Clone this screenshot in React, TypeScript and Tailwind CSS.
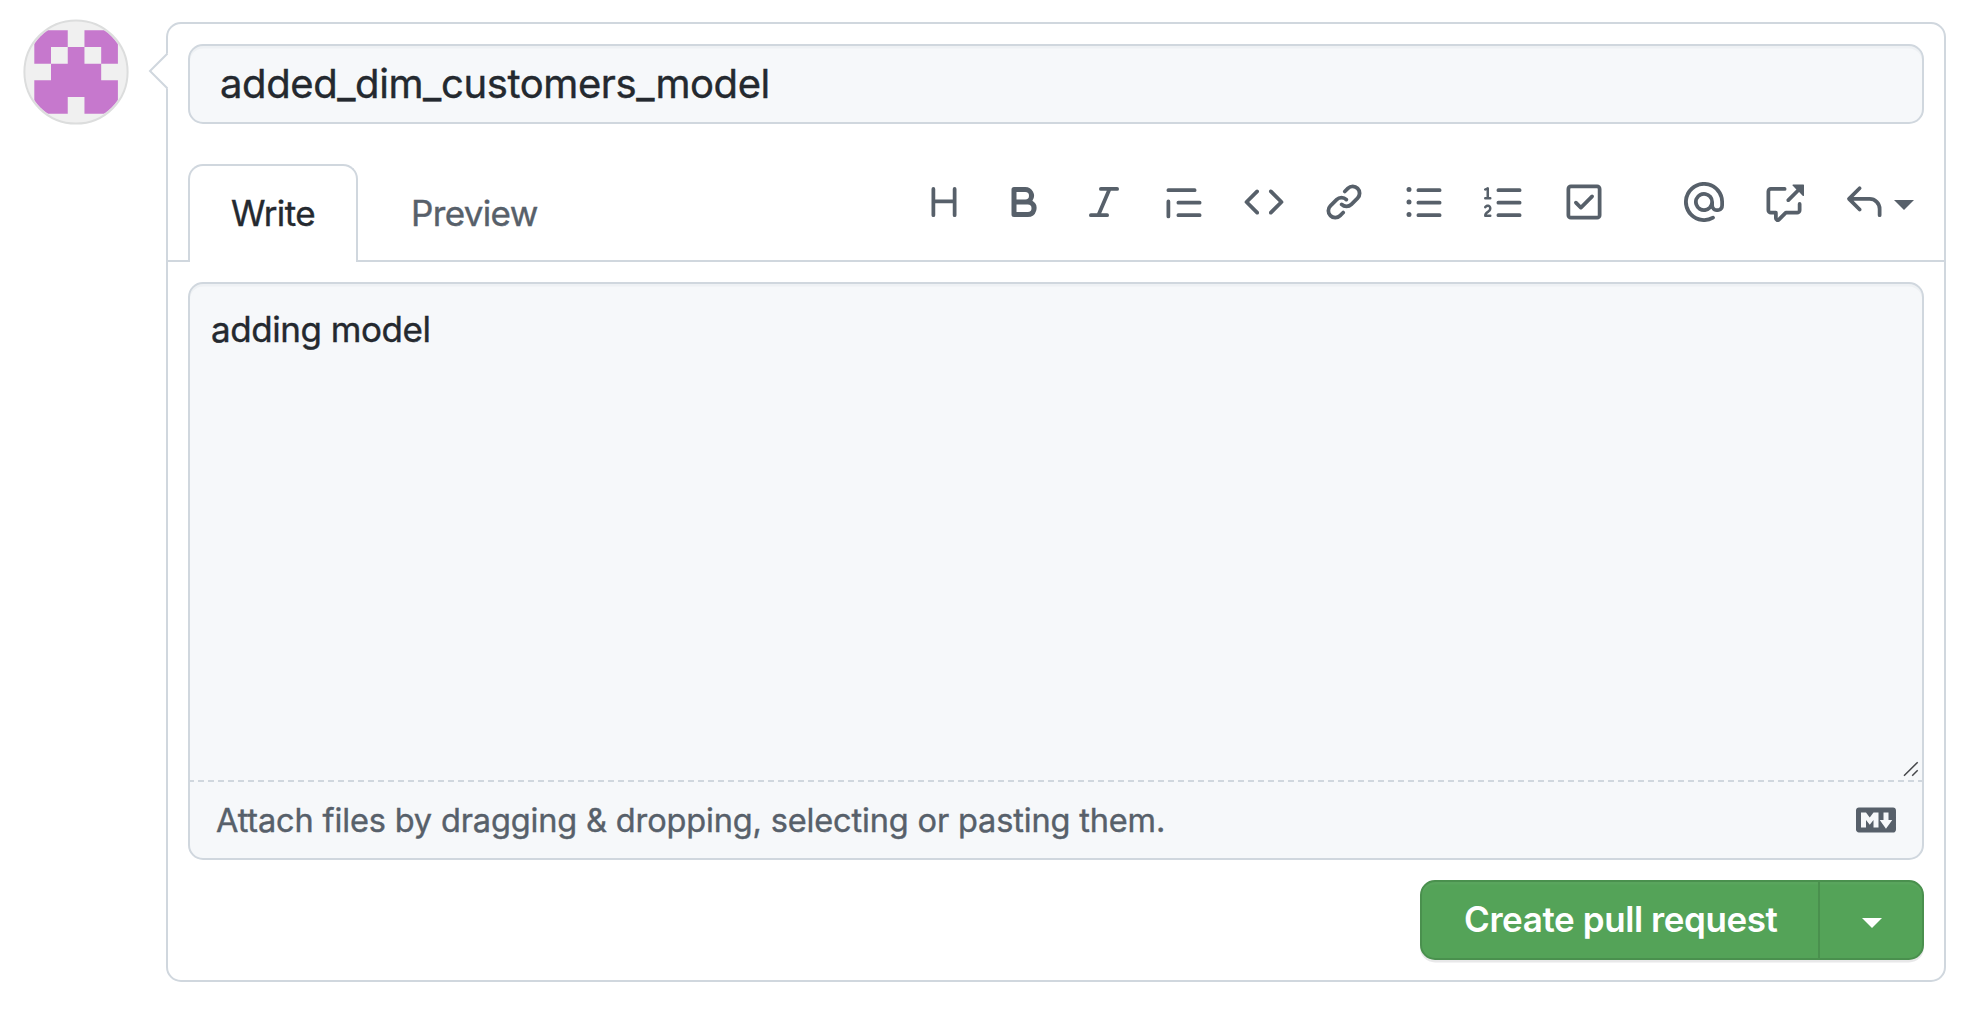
const ICONS = {
  heading:
    "M3.75 2a.75.75 0 0 1 .75.75V7h7V2.75a.75.75 0 0 1 1.5 0v10.5a.75.75 0 0 1-1.5 0V8.5h-7v4.75a.75.75 0 0 1-1.5 0V2.75A.75.75 0 0 1 3.75 2Z",
  bold: "M4 2h4.5a3.501 3.501 0 0 1 2.852 5.53A3.499 3.499 0 0 1 9.5 14H4a1 1 0 0 1-1-1V3a1 1 0 0 1 1-1Zm1 7v3h4.5a1.5 1.5 0 0 0 0-3Zm3.5-2a1.5 1.5 0 0 0 0-3H5v3Z",
  italic:
    "M6 2.75A.75.75 0 0 1 6.75 2h6.5a.75.75 0 0 1 0 1.5h-2.505l-3.858 9H9.25a.75.75 0 0 1 0 1.5h-6.5a.75.75 0 0 1 0-1.5h2.505l3.858-9H6.75A.75.75 0 0 1 6 2.75Z",
  quote:
    "M1.75 2.5h10.5a.75.75 0 0 1 0 1.5H1.75a.75.75 0 0 1 0-1.5Zm4 5h8.5a.75.75 0 0 1 0 1.5h-8.5a.75.75 0 0 1 0-1.5Zm0 5h8.5a.75.75 0 0 1 0 1.5h-8.5a.75.75 0 0 1 0-1.5ZM2.5 7.75v6a.75.75 0 0 1-1.5 0v-6a.75.75 0 0 1 1.5 0Z",
  code: "m11.28 3.22 4.25 4.25a.75.75 0 0 1 0 1.06l-4.25 4.25a.749.749 0 0 1-1.275-.326.749.749 0 0 1 .215-.734L13.94 8l-3.72-3.72a.749.749 0 0 1 .326-1.275.749.749 0 0 1 .734.215Zm-6.56 0a.751.751 0 0 1 1.042.018.751.751 0 0 1 .018 1.042L2.06 8l3.72 3.72a.749.749 0 0 1-.326 1.275.749.749 0 0 1-.734-.215L.47 8.53a.75.75 0 0 1 0-1.06Z",
  link: "m7.775 3.275 1.25-1.25a3.5 3.5 0 1 1 4.95 4.95l-2.5 2.5a3.5 3.5 0 0 1-4.95 0 .751.751 0 0 1 .018-1.042.751.751 0 0 1 1.042-.018 1.998 1.998 0 0 0 2.83 0l2.5-2.5a2.002 2.002 0 0 0-2.83-2.83l-1.25 1.25a.751.751 0 0 1-1.042-.018.751.751 0 0 1-.018-1.042Zm-4.69 9.64a1.998 1.998 0 0 0 2.83 0l1.25-1.25a.751.751 0 0 1 1.042.018.751.751 0 0 1 .018 1.042l-1.25 1.25a3.5 3.5 0 1 1-4.95-4.95l2.5-2.5a3.5 3.5 0 0 1 4.95 0 .751.751 0 0 1-.018 1.042.751.751 0 0 1-1.042.018 1.998 1.998 0 0 0-2.83 0l-2.5 2.5a1.998 1.998 0 0 0 0 2.83Z",
  bullets:
    "M5.75 2.5h8.5a.75.75 0 0 1 0 1.5h-8.5a.75.75 0 0 1 0-1.5Zm0 5h8.5a.75.75 0 0 1 0 1.5h-8.5a.75.75 0 0 1 0-1.5Zm0 5h8.5a.75.75 0 0 1 0 1.5h-8.5a.75.75 0 0 1 0-1.5ZM2 14a1 1 0 1 1 0-2 1 1 0 0 1 0 2Zm1-6a1 1 0 1 1-2 0 1 1 0 0 1 2 0ZM2 4a1 1 0 1 1 0-2 1 1 0 0 1 0 2Z",
  numbers:
    "M5 3.25a.75.75 0 0 1 .75-.75h8.5a.75.75 0 0 1 0 1.5h-8.5A.75.75 0 0 1 5 3.25Zm0 5a.75.75 0 0 1 .75-.75h8.5a.75.75 0 0 1 0 1.5h-8.5A.75.75 0 0 1 5 8.25Zm0 5a.75.75 0 0 1 .75-.75h8.5a.75.75 0 0 1 0 1.5h-8.5a.75.75 0 0 1-.75-.75ZM.924 10.32a.5.5 0 0 1-.851-.525l.001-.001.001-.002.002-.004.007-.011c.097-.144.215-.273.348-.384.228-.19.588-.392 1.068-.392.468 0 .858.181 1.126.484.259.294.377.673.377 1.038 0 .987-.686 1.495-1.156 1.845l-.047.035c-.303.225-.522.4-.654.597h1.357a.5.5 0 0 1 0 1H.5a.5.5 0 0 1-.5-.5c0-1.005.692-1.52 1.167-1.875l.035-.025c.531-.396.8-.625.8-1.078a.57.57 0 0 0-.128-.376C1.806 10.068 1.695 10 1.5 10a.658.658 0 0 0-.429.163.835.835 0 0 0-.144.153ZM2.003 2.5V6h.503a.5.5 0 0 1 0 1H.5a.5.5 0 0 1 0-1h.503V3.308l-.28.14a.5.5 0 0 1-.446-.895l1.003-.5a.5.5 0 0 1 .723.447Z",
  tasks:
    "M2.5 2.75a.25.25 0 0 1 .25-.25h10.5a.25.25 0 0 1 .25.25v10.5a.25.25 0 0 1-.25.25H2.75a.25.25 0 0 1-.25-.25V2.75ZM2.75 1A1.75 1.75 0 0 0 1 2.75v10.5c0 .966.784 1.75 1.75 1.75h10.5A1.75 1.75 0 0 0 15 13.25V2.75A1.75 1.75 0 0 0 13.25 1H2.75Zm9.03 5.28a.75.75 0 0 0-1.06-1.06L6.75 9.19 5.28 7.72a.75.75 0 0 0-1.06 1.06l2 2a.75.75 0 0 0 1.06 0l4.5-4.5Z",
  mention:
    "M4.75 2.37a6.501 6.501 0 0 0 6.5 11.26.75.75 0 0 1 .75 1.298A7.999 7.999 0 0 1 .989 4.148 8 8 0 0 1 16 7.75v1.5a2.75 2.75 0 0 1-5.072 1.475 3.999 3.999 0 0 1-6.65-4.19A4 4 0 0 1 12 8v1.25a1.25 1.25 0 0 0 2.5 0V7.867a6.5 6.5 0 0 0-9.75-5.496ZM10.5 8a2.5 2.5 0 1 0-5 0 2.5 2.5 0 0 0 5 0Z",
  crossReference:
    "M2.75 3.5a.25.25 0 0 0-.25.25v7.5c0 .138.112.25.25.25h2a.75.75 0 0 1 .75.75v2.19l2.72-2.72a.749.749 0 0 1 .53-.22h4.5a.25.25 0 0 0 .25-.25v-2.5a.75.75 0 0 1 1.5 0v2.5A1.75 1.75 0 0 1 13.25 13H9.06l-2.573 2.573A1.458 1.458 0 0 1 4 14.543V13H2.75A1.75 1.75 0 0 1 1 11.25v-7.5C1 2.784 1.784 2 2.75 2h5.5a.75.75 0 0 1 0 1.5ZM16 1.25v4.146a.25.25 0 0 1-.427.177L14.03 4.03l-3.75 3.75a.749.749 0 0 1-1.275-.326.749.749 0 0 1 .215-.734l3.75-3.75-1.543-1.543A.25.25 0 0 1 11.604 1h4.146a.25.25 0 0 1 .25.25Z",
  reply:
    "M6.78 1.97a.75.75 0 0 1 0 1.06L3.81 6h6.44A4.75 4.75 0 0 1 15 10.75v2.5a.75.75 0 0 1-1.5 0v-2.5a3.25 3.25 0 0 0-3.25-3.25H3.81l2.97 2.97a.749.749 0 0 1-.326 1.275.749.749 0 0 1-.734-.215L1.47 7.28a.75.75 0 0 1 0-1.06l4.25-4.25a.75.75 0 0 1 1.06 0Z",
  markdown:
    "M14.85 3c.63 0 1.15.52 1.14 1.15v7.7c0 .63-.51 1.15-1.15 1.15H1.15C.52 13 0 12.48 0 11.84V4.15C0 3.52.52 3 1.15 3ZM9 11V5H7L5.5 7 4 5H2v6h2V8l1.5 1.92L7 8v3Zm2.99.5L14.5 8H13V5h-2v3H9.5Z",
};

type IconName = keyof typeof ICONS;

function Icon({ name }: { name: IconName }) {
  return (
    <svg viewBox="0 0 16 16" className="size-10 shrink-0 fill-current" aria-hidden="true">
      <path fillRule="evenodd" d={ICONS[name]} />
    </svg>
  );
}

const FORMATTING: IconName[] = ["heading", "bold", "italic", "quote", "code", "link", "bullets", "numbers", "tasks"];

function Avatar() {
  return (
    <svg viewBox="0 0 106 106" className="mt-[19px] ml-[23px] size-[106px] shrink-0" aria-label="Avatar">
      <defs>
        <clipPath id="avatar-clip">
          <circle cx="53" cy="53" r="50.3" />
        </clipPath>
      </defs>
      <circle cx="53" cy="53" r="51.6" fill="#f0f0f0" stroke="#dcdddd" strokeWidth="2" />
      <g clipPath="url(#avatar-clip)">
        {/* Outline of the face on a 5 by 5 grid, with the two eyes cut out */}
        <path
          transform="translate(11.3 11.2) scale(16.72)"
          fill="#c678cd"
          fillRule="evenodd"
          d="M0 0H2V1H3V0H5V2H4V3H5V5H3V4H2V5H0V3H1V2H0ZM1 1V2H2V1ZM3 1V2H4V1Z"
        />
      </g>
    </svg>
  );
}

function Toolbar() {
  return (
    <div className="mt-[18px] flex items-start text-[#57606a]">
      <div className="flex gap-10">
        {FORMATTING.map((name) => (
          <button key={name} aria-label={name}>
            <Icon name={name} />
          </button>
        ))}
      </div>
      <div className="ml-20 flex gap-10">
        <button aria-label="mention">
          <Icon name="mention" />
        </button>
        <button aria-label="reference">
          <Icon name="crossReference" />
        </button>
        <button aria-label="saved replies" className="flex items-center gap-[10px]">
          <Icon name="reply" />
          <span className="mt-[6px] border-x-[10px] border-t-[10px] border-x-transparent border-t-current" />
        </button>
      </div>
    </div>
  );
}

export default function App() {
  return (
    <div className="flex h-[1010px] w-[1972px] bg-white font-['Inter',sans-serif] text-[#24292f] [-webkit-text-stroke-width:0.4px]">
      <Avatar />
      <div className="relative mt-[22px] ml-[37px] flex h-[960px] w-[1780px] flex-col rounded-[15px] border-2 border-[#d0d7de] bg-white p-5">
        <svg viewBox="0 0 20 38" className="absolute top-[28px] left-[-20px] h-[38px] w-5" aria-hidden="true">
          <path d="M20 1 2 19 20 37Z" fill="#fff" />
          <path d="M19.5 1.5 2 19 19.5 36.5" fill="none" stroke="#d0d7de" strokeWidth="2" />
        </svg>

        <div className="flex h-20 shrink-0 items-center rounded-[15px] border-2 border-[#d0d7de] bg-[#f6f8fa] px-[30px] text-[40px] leading-none tracking-[-0.4px] shadow-[inset_0_2.5px_0_rgba(208,215,222,0.2)]">
          added_dim_customers_model
        </div>

        <div className="-mx-5 mt-10 flex h-[98px] shrink-0 items-start border-b-2 border-[#d0d7de] px-5 text-[35px] leading-none">
          <div className="flex h-[98px] w-[170px] items-center rounded-t-[15px] border-2 border-b-0 border-[#d0d7de] bg-white pb-[2px] pl-[41px] tracking-[-0.6px]">
            Write
          </div>
          <div className="flex h-[98px] flex-1 items-center pl-[53px] tracking-[-0.65px] text-[#57606a]">Preview</div>
          <div className="mr-[10px]">
            <Toolbar />
          </div>
        </div>

        <div className="mt-5 flex h-[578px] shrink-0 flex-col rounded-[15px] border-2 border-[#d0d7de] bg-[#f6f8fa] shadow-[inset_0_2.5px_0_rgba(208,215,222,0.2)]">
          <div className="relative flex-1 px-[21px] pt-[18px] text-[35px] leading-[54px] tracking-[-0.45px]">
            adding model
            <svg
              viewBox="0 0 16 16"
              className="absolute right-[3px] bottom-[3px] size-4 stroke-[#45474a]"
              fill="none"
              strokeWidth="1.5"
              aria-hidden="true"
            >
              <path d="M1 14.8 14.7 1.2M9.2 14.8 14.7 9.3" />
            </svg>
          </div>
          <div className="-mx-[2px] border-t-2 border-dashed border-[#d0d7de]" />
          <div className="flex h-[76px] items-center justify-between pr-[26px] pl-[26px] text-[32.5px] tracking-[-0.145px] text-[#57606a]">
            <span className="pt-[2px] leading-none">
              Attach files by dragging &amp; dropping, selecting or pasting them.
            </span>
            <Icon name="markdown" />
          </div>
        </div>

        <div className="mt-5 flex h-20 w-[504px] shrink-0 self-end rounded-[15px] border-2 border-[#4a904e] bg-[#54a358] text-white shadow-[0_2.5px_0_rgba(27,31,36,0.1),inset_0_2.5px_0_rgba(255,255,255,0.03)] [-webkit-text-stroke-width:0]">
          <button className="flex w-[398px] items-center border-r-2 border-[#4a904e] pb-[2px] pl-[42px] text-[35px] leading-none font-semibold tracking-[-0.41px] whitespace-nowrap">
            Create pull request
          </button>
          <button aria-label="More options" className="flex flex-1 items-center justify-center pt-[6px] pl-[2px]">
            <span className="border-x-[10px] border-t-[10px] border-x-transparent border-t-white" />
          </button>
        </div>
      </div>
    </div>
  );
}
